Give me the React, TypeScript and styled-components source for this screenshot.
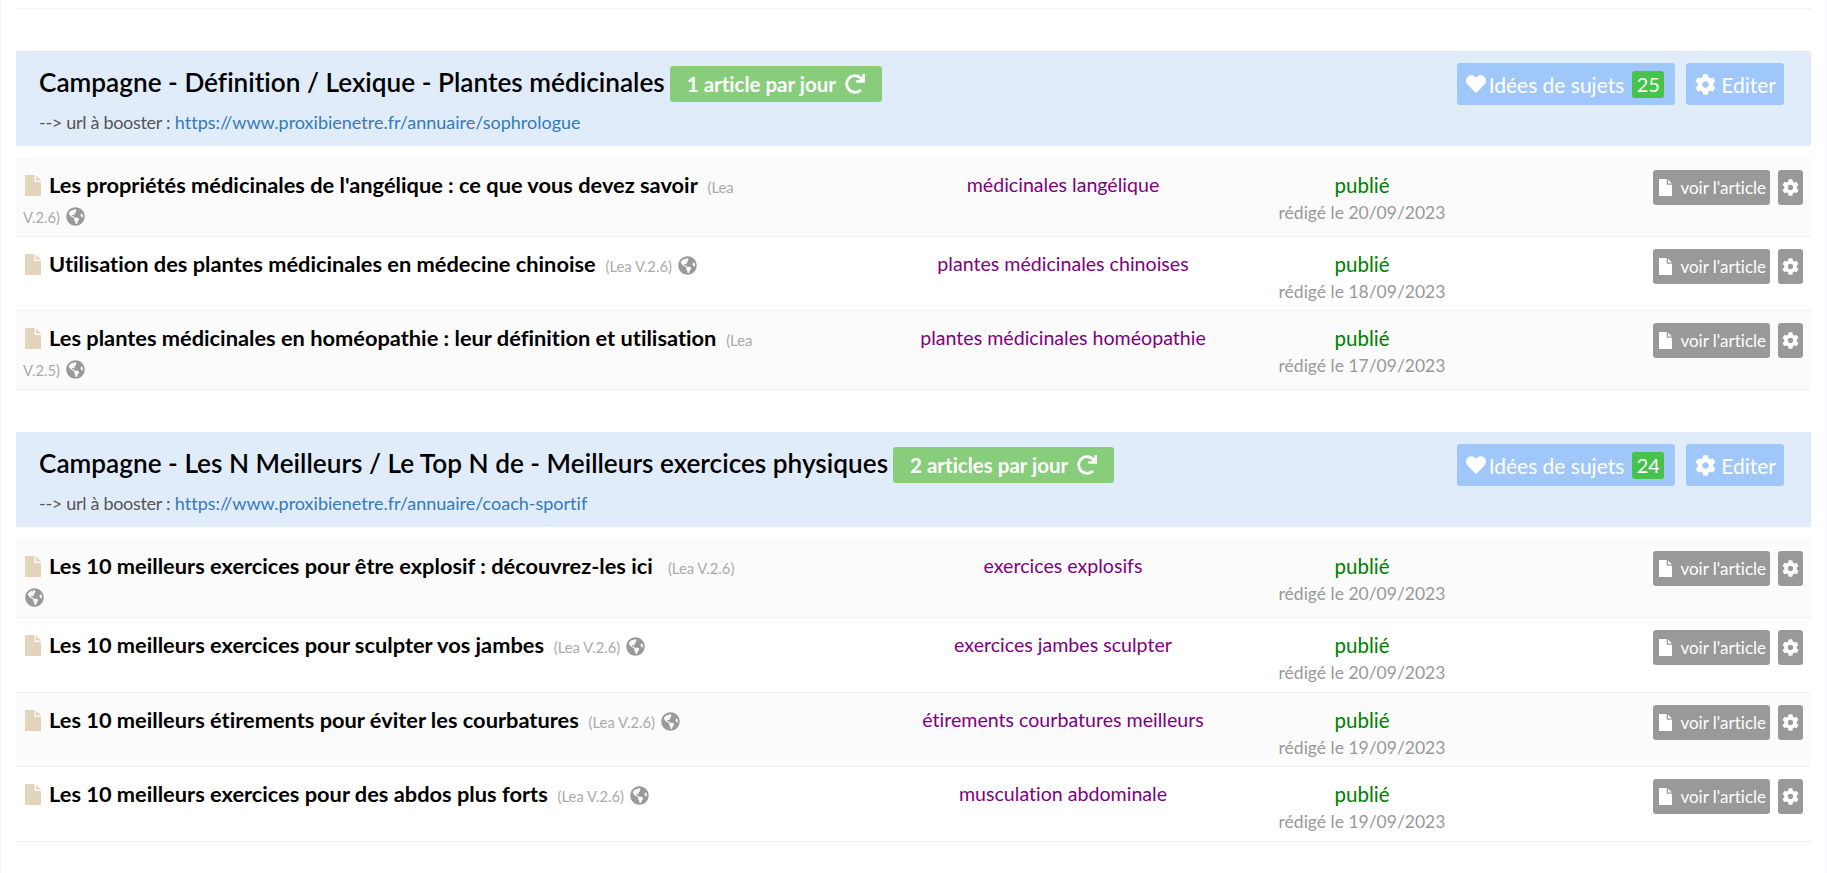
import React from 'react'
import styled, { createGlobalStyle } from 'styled-components'
import { FaCog, FaGlobeAmericas, FaHeart, FaRedo } from 'react-icons/fa'

const GlobalStyle = createGlobalStyle`
  html, body {
    margin: 0;
    padding: 0;
    background: #fff;
    font-family: Lato, "Open Sans", sans-serif;
    font-variant-ligatures: none;
    color: #333;
  }
`

const Page = styled.div`
  height: 873px;
  box-sizing: border-box;
  overflow: hidden;
  padding: 8px 15px 0 15px;
  border-left: 1px solid #f1f3f6;
  border-right: 1px solid #f1f3f6;
`

const TopRule = styled.div`
  height: 1px;
  background: #f0f0f0;
  margin-bottom: 42px;
`

const Campaign = styled.section`
  margin-bottom: 42px;
`

const Banner = styled.header`
  height: 95px;
  box-sizing: border-box;
  background: #e1ecfb;
  padding: 12px 27px 0 23px;
  display: flex;
  justify-content: space-between;
  align-items: flex-start;
  margin-bottom: 12px;
`

const TitleLine = styled.div`
  display: flex;
  align-items: center;
  gap: 5px;
  height: 42px;
`

const CampaignTitle = styled.h2`
  margin: 0 0 4px;
  font-size: 26.2px;
  font-weight: 600;
  color: #000;
  white-space: nowrap;
`

const Rhythm = styled.span`
  display: inline-flex;
  align-items: center;
  gap: 9px;
  height: 36px;
  padding: 0 17px 0 17px;
  border-radius: 3px;
  background: #88cd7c;
  color: #fff;
  font-size: 20.5px;
  font-weight: 700;
`

const BoostLine = styled.div`
  margin-top: 4px;
  font-size: 18px;
  line-height: 26px;
  color: #555;
`

const BoostLabel = styled.span`
  letter-spacing: -0.3px;
`

const BoostLink = styled.a`
  color: #337ab7;
  text-decoration: none;
`

const BannerActions = styled.div`
  display: flex;
  gap: 11px;
`

const BannerButton = styled.span`
  display: inline-flex;
  align-items: center;
  gap: 5px;
  height: 42px;
  padding: 0 8px 0 9px;
  border-radius: 3px;
  background: #9fc7fa;
  color: #fff;
  font-size: 21px;
`

const HeartIcon = styled(FaHeart)`
  margin-right: -2px;
`

const Count = styled.span`
  display: inline-block;
  width: 32px;
  height: 27px;
  margin: 0 3px;
  border-radius: 3px;
  background: #45c34a;
  font-size: 20px;
  line-height: 27px;
  text-align: center;
`

const Row = styled.div<{ $h: number; $stripe: boolean }>`
  height: ${p => p.$h}px;
  box-sizing: border-box;
  display: grid;
  grid-template-columns: 844px 406px 192px 1fr;
  background: ${p => (p.$stripe ? '#fbfbfb' : '#fff')};
  border-bottom: 1px solid #eeeeee;
  padding-top: 12px;
`

const TitleCell = styled.div`
  padding: 0 102px 0 7px;
  font-size: 14.8px;
  line-height: 30px;
  color: #aaa;
`

const DocShape = styled.svg`
  width: 16px;
  height: 21px;
  fill: currentColor;
  flex: none;
`

const DocIcon = styled(DocShape)`
  color: #e2d5bb;
  margin: 0 8px 0 2px;
  vertical-align: -3px;
`

const ArticleTitle = styled.a`
  font-size: 21.8px;
  font-weight: 700;
  color: #000;
  margin-right: 6px;
`

const GlobeIcon = styled(FaGlobeAmericas)`
  color: #999;
  font-size: 19px;
  margin-left: 2px;
  vertical-align: -3px;
`

const Keyword = styled.div`
  text-align: center;
  font-size: 19.6px;
  line-height: 30px;
  color: #800080;
`

const StatusCell = styled.div`
  text-align: center;
`

const Published = styled.div`
  font-size: 20.5px;
  line-height: 30px;
  color: #008000;
`

const Written = styled.div`
  font-size: 17.5px;
  line-height: 26px;
  color: #999;
`

const RowActions = styled.div`
  display: flex;
  justify-content: flex-end;
  align-items: flex-start;
  gap: 8px;
  padding-right: 8px;
`

const GreyButton = styled.span`
  display: inline-flex;
  align-items: center;
  gap: 8px;
  height: 35px;
  box-sizing: border-box;
  padding: 0 4px 0 6px;
  border-radius: 3px;
  background: #999;
  color: #fff;
  font-size: 17px;
`

const GearButton = styled(GreyButton)`
  width: 25px;
  padding: 0;
  justify-content: center;
`

const SmallDoc = styled(DocShape)`
  width: 13px;
  height: 17px;
`

function DocGlyph({ as: Shape }: { as: typeof DocShape }) {
  return (
    <Shape viewBox="0 0 16 21">
      <path d="M0 0H9.5V7H16V21H0Z" />
      <path d="M11 0.5L16 5.5H11Z" />
    </Shape>
  )
}

const campaigns = [
  {
    title: 'Campagne - Définition / Lexique - Plantes médicinales',
    rhythm: '1 article par jour',
    url: 'https://www.proxibienetre.fr/annuaire/sophrologue',
    ideas: 25,
    rows: [
      { h: 79, title: "Les propriétés médicinales de l'angélique : ce que vous devez savoir", version: 'V.2.6', key: 'médicinales langélique', date: '20/09/2023' },
      { h: 74, title: 'Utilisation des plantes médicinales en médecine chinoise', version: 'V.2.6', key: 'plantes médicinales chinoises', date: '18/09/2023' },
      { h: 79, title: 'Les plantes médicinales en homéopathie : leur définition et utilisation', version: 'V.2.5', key: 'plantes médicinales homéopathie', date: '17/09/2023' },
    ],
  },
  {
    title: 'Campagne - Les N Meilleurs / Le Top N de - Meilleurs exercices physiques',
    rhythm: '2 articles par jour',
    url: 'https://www.proxibienetre.fr/annuaire/coach-sportif',
    ideas: 24,
    rows: [
      { h: 79, title: 'Les 10 meilleurs exercices pour être explosif : découvrez-les ici\u00a0', version: 'V.2.6', key: 'exercices explosifs', date: '20/09/2023' },
      { h: 75, title: 'Les 10 meilleurs exercices pour sculpter vos jambes', version: 'V.2.6', key: 'exercices jambes sculpter', date: '20/09/2023' },
      { h: 74, title: 'Les 10 meilleurs étirements pour éviter les courbatures', version: 'V.2.6', key: 'étirements courbatures meilleurs', date: '19/09/2023' },
      { h: 75, title: 'Les 10 meilleurs exercices pour des abdos plus forts', version: 'V.2.6', key: 'musculation abdominale', date: '19/09/2023' },
    ],
  },
]

export default function App() {
  return (
    <Page>
      <GlobalStyle />
      <TopRule />
      {campaigns.map(c => (
        <Campaign key={c.title}>
          <Banner>
            <div>
              <TitleLine>
                <CampaignTitle>{c.title}</CampaignTitle>
                <Rhythm>
                  {c.rhythm} <FaRedo size={20} />
                </Rhythm>
              </TitleLine>
              <BoostLine>
                <BoostLabel>--&gt; url à booster :</BoostLabel> <BoostLink href="#">{c.url}</BoostLink>
              </BoostLine>
            </div>
            <BannerActions>
              <BannerButton>
                <HeartIcon size={20} /> Idées de sujets <Count>{c.ideas}</Count>
              </BannerButton>
              <BannerButton>
                <FaCog size={21} /> Editer
              </BannerButton>
            </BannerActions>
          </Banner>
          {c.rows.map((r, i) => (
            <Row key={r.title} $h={r.h} $stripe={i % 2 === 0}>
              <TitleCell>
                <DocGlyph as={DocIcon} />
                <ArticleTitle>{r.title}</ArticleTitle> (Lea {r.version}){' '}
                <GlobeIcon />
              </TitleCell>
              <Keyword>{r.key}</Keyword>
              <StatusCell>
                <Published>publié</Published>
                <Written>rédigé le {r.date}</Written>
              </StatusCell>
              <RowActions>
                <GreyButton>
                  <DocGlyph as={SmallDoc} /> voir l'article
                </GreyButton>
                <GearButton>
                  <FaCog size={17} />
                </GearButton>
              </RowActions>
            </Row>
          ))}
        </Campaign>
      ))}
    </Page>
  )
}
